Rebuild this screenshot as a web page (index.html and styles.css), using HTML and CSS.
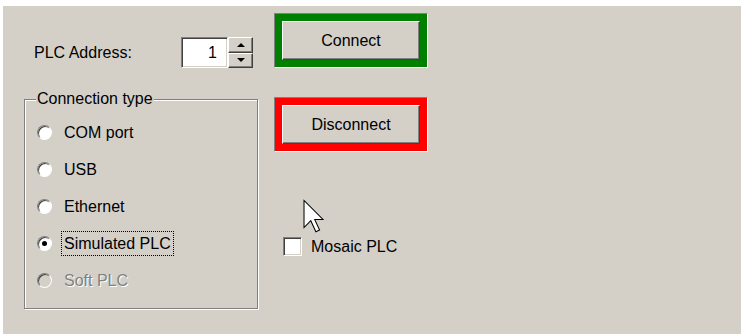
FILE: index.html
```html
<!DOCTYPE html>
<html>
<head>
    <title>PLC Connection</title>
    <link rel="stylesheet" href="styles.css">
</head>
<body>
    <div class="window">
        <div class="left-col">
            <div class="address-row">
                <span class="address-label">PLC Address:</span>
                <div class="spin">
                    <div class="spin-edit">1</div>
                    <div class="spin-buttons">
                        <div class="spin-btn"><span class="arrow-up"></span></div>
                        <div class="spin-btn"><span class="arrow-down"></span></div>
                    </div>
                </div>
            </div>

            <div class="group">
                <div class="group-title">Connection type</div>
                <div class="radio-list">
                    <div class="radio-row"><span class="radio"></span><span class="radio-label">COM port</span></div>
                    <div class="radio-row"><span class="radio"></span><span class="radio-label">USB</span></div>
                    <div class="radio-row"><span class="radio"></span><span class="radio-label">Ethernet</span></div>
                    <div class="radio-row"><span class="radio checked"><span class="dot"></span></span><span class="radio-label focused">Simulated PLC</span></div>
                    <div class="radio-row disabled"><span class="radio"></span><span class="radio-label">Soft PLC</span></div>
                </div>
            </div>
        </div>

        <div class="right-col">
            <div class="frame">
                <div class="frame-color green">
                    <div class="button">Connect</div>
                </div>
            </div>
            <div class="frame second">
                <div class="frame-color red">
                    <div class="button">Disconnect</div>
                </div>
            </div>

            <div class="check-row">
                <span class="checkbox"></span>
                <span class="check-label">Mosaic PLC</span>
            </div>

            <svg class="cursor" width="21" height="34" viewBox="-0.6 -0.6 12.4 19.6">
                <path d="M0 0 L0 16 L4 12 L7 18.5 L9.2 17.5 L6.3 11.2 L11.2 11.2 Z" fill="#fff" stroke="#000" stroke-width="0.6" stroke-linejoin="miter"/>
            </svg>
        </div>
    </div>
</body>
</html>
```

FILE: styles.css
```css
body {
    margin: 0;
    background-color: #fff;
    font-family: "Liberation Sans", Arial, sans-serif;
    font-size: 16px;
    color: #000;
}

.window {
    margin: 6px 0 0 3px;
    height: 328px;
    background-color: #d4d0c8;
    display: flex;
    padding-left: 21px;
}

/* left column */
.left-col {
    width: 234px;
}

.address-row {
    display: flex;
    align-items: center;
    margin-top: 31px;
    height: 31px;
}

.address-label {
    width: 147px;
    padding-left: 10px;
}

.spin {
    display: flex;
    height: 31px;
}

.spin-edit {
    width: 47px;
    box-sizing: border-box;
    background-color: #fff;
    border: 1px solid;
    border-color: #808080 #fff #fff #808080;
    box-shadow: inset 1px 1px #404040, inset -1px -1px #d4d0c8;
    text-align: right;
    padding-right: 10px;
    line-height: 29px;
}

.spin-buttons {
    display: flex;
    flex-direction: column;
    width: 25px;
}

.spin-btn {
    flex: 1;
    box-sizing: border-box;
    border: 1px solid;
    border-color: #fff #404040 #404040 #fff;
    box-shadow: inset -1px -1px #808080;
    display: flex;
    align-items: center;
    justify-content: center;
}

.arrow-up {
    border-left: 4px solid transparent;
    border-right: 4px solid transparent;
    border-bottom: 4px solid #000;
}

.arrow-down {
    border-left: 4px solid transparent;
    border-right: 4px solid transparent;
    border-top: 4px solid #000;
}

.group {
    margin-top: 31px;
    height: 210px;
    box-sizing: border-box;
    border: 1px solid #808080;
    box-shadow: inset 1px 1px #fff, 1px 1px #fff;
}

.group-title {
    width: max-content;
    margin: -10px 0 0 11px;
    padding: 0 1px;
    line-height: 18px;
    background-color: #d4d0c8;
}

.radio-list {
    margin-top: 6px;
    padding-left: 12px;
}

.radio-row {
    display: flex;
    align-items: center;
    height: 37px;
}

.radio {
    width: 15px;
    height: 15px;
    box-sizing: border-box;
    border-radius: 50%;
    background-color: #fff;
    border: 1px solid;
    border-color: #808080 #fff #fff #808080;
    box-shadow: inset 1px 1px #404040;
    display: flex;
    align-items: center;
    justify-content: center;
}

.dot {
    width: 5px;
    height: 5px;
    border-radius: 50%;
    background-color: #000;
}

.radio-label {
    margin-left: 9px;
    padding: 2px 2px;
    line-height: 19px;
    border: 1px dotted transparent;
}

.radio-label.focused {
    border-color: #000;
}

.disabled .radio {
    background-color: #d4d0c8;
}

.disabled .radio-label {
    color: #808080;
    text-shadow: 1px 1px #fff;
}

/* right column */
.right-col {
    position: relative;
    margin-left: 16px;
    padding-top: 7px;
}

.frame {
    width: 154px;
    box-sizing: border-box;
    border: 1px solid;
    border-color: #808080 #fff #fff #808080;
}

.frame.second {
    margin-top: 29px;
}

.frame-color {
    border: 7px solid;
}

.frame-color.green {
    border-color: #008000;
}

.frame-color.red {
    border-color: #ff0000;
}

.button {
    height: 39px;
    box-sizing: border-box;
    border: 1px solid;
    border-color: #fff #404040 #404040 #fff;
    box-shadow: inset -1px -1px #808080;
    background-color: #d4d0c8;
    display: flex;
    align-items: center;
    justify-content: center;
}

.check-row {
    display: flex;
    align-items: center;
    margin: 85px 0 0 9px;
}

.checkbox {
    width: 19px;
    height: 19px;
    box-sizing: border-box;
    background-color: #fff;
    border: 1px solid;
    border-color: #808080 #fff #fff #808080;
    box-shadow: inset 1px 1px #404040, inset -1px -1px #d4d0c8;
}

.check-label {
    margin-left: 9px;
}

.cursor {
    position: absolute;
    left: 29px;
    top: 193px;
}
```
